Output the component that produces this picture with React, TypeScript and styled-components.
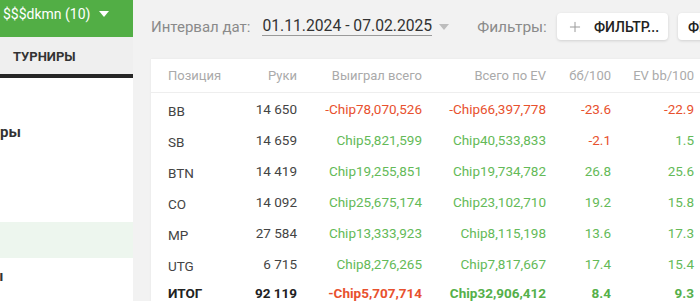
import styled, { createGlobalStyle } from "styled-components";
import { Plus } from "lucide-react";

const GlobalStyle = createGlobalStyle`
  body {
    margin: 0;
    overflow: hidden;
    background: #f2f2f2;
    font-family: Roboto, "Liberation Sans", sans-serif;
  }
`;

const Page = styled.div`
  display: flex;
  width: 700px;
  height: 301px;
  overflow: hidden;
`;

const Sidebar = styled.aside`
  width: 133px;
  flex-shrink: 0;
  background: #fff;
  overflow: hidden;
  display: flex;
  flex-direction: column;
`;

const AccountBar = styled.div`
  height: 37px;
  flex-shrink: 0;
  box-sizing: border-box;
  background: #52ae45;
  color: #fff;
  display: flex;
  align-items: flex-start;
  gap: 9px;
  padding: 4px 0 0 3px;
  font-size: 14px;
  font-weight: 400;
  line-height: 20px;
  white-space: nowrap;
`;

const Caret = styled.span<{ color: string; top?: number }>`
  width: 0;
  height: 0;
  border-left: 5px solid transparent;
  border-right: 5px solid transparent;
  border-top: 6px solid ${(p) => p.color};
  align-self: ${(p) => (p.top === undefined ? "center" : "flex-start")};
  margin-top: ${(p) => p.top ?? 0}px;
`;

const TabBar = styled.div`
  height: 41px;
  flex-shrink: 0;
  box-sizing: border-box;
  background: #efefef;
  border-bottom: 4px solid #262626;
  display: flex;
  align-items: center;
  padding: 2px 0 0 13px;
  font-size: 13px;
  font-weight: 700;
  color: #333;
`;

const MenuItem = styled.div<{ active?: boolean; shift?: number }>`
  height: 36px;
  flex-shrink: 0;
  display: flex;
  align-items: center;
  background: ${(p) => (p.active ? "#edf6ee" : "transparent")};
  font-size: 15px;
  font-weight: 700;
  color: #333;
  white-space: nowrap;
  span {
    margin-left: ${(p) => -(p.shift ?? 0)}px;
  }
`;

const Main = styled.main`
  flex: 1;
  padding-left: 18px;
  display: flex;
  flex-direction: column;
  min-width: 0;
`;

const Toolbar = styled.div`
  height: 53px;
  flex-shrink: 0;
  margin-bottom: 6px;
  display: flex;
  align-items: center;
  white-space: nowrap;
  font-size: 15px;
`;

const Label = styled.span<{ gap?: number; size?: number }>`
  color: #8a8a8a;
  font-size: ${(p) => p.size ?? 15}px;
  margin-left: ${(p) => p.gap ?? 0}px;
`;

const DateRange = styled.span`
  color: #333;
  font-size: 15.7px;
  margin-left: 12px;
  border-bottom: 1px solid #9a9a9a;
  line-height: 18px;
  margin-right: 7px;
`;

const FilterButton = styled.button`
  flex-shrink: 0;
  width: 111px;
  height: 27px;
  margin-left: 10px;
  padding: 0 0 0 10px;
  border: none;
  border-radius: 4px;
  background: #fff;
  box-shadow: 0 1px 3px rgba(0, 0, 0, 0.14);
  display: flex;
  align-items: center;
  gap: 11px;
  font-family: inherit;
  font-size: 14px;
  font-weight: 500;
  color: #222;
  svg {
    color: #9a9a9a;
    flex-shrink: 0;
  }
`;

const Card = styled.div`
  width: 660px;
  flex-shrink: 0;
  background: #fff;
  box-shadow: 0 0 2px rgba(0, 0, 0, 0.06);
  display: grid;
  grid-template-columns: 89px 57px 125px 124px 65px 83px 1fr;
  font-size: 13.5px;
`;

const HeadCell = styled.div`
  height: 33px;
  display: flex;
  align-items: center;
  justify-content: flex-end;
  font-size: 13px;
  color: #aaa;
  border-bottom: 1px solid #eee;
  white-space: nowrap;
  &:first-child {
    justify-content: flex-start;
    padding-left: 17px;
  }
`;

type Tone = "pos" | "neg" | "plain";

const Cell = styled.div<{ tone: Tone; total?: boolean; first?: boolean }>`
  height: ${(p) => (p.total ? 27 : 31)}px;
  box-sizing: border-box;
  display: flex;
  align-items: center;
  justify-content: ${(p) => (p.first ? "flex-start" : "flex-end")};
  padding-left: ${(p) => (p.first ? 17 : 0)}px;
  padding-top: ${(p) => (p.first && !p.total ? 5 : 0)}px;
  white-space: nowrap;
  font-weight: ${(p) => (p.total ? 700 : 400)};
  color: ${(p) =>
    p.tone === "pos"
      ? p.total
        ? "#55b04a"
        : "#64ba58"
      : p.tone === "neg"
      ? "#e8512e"
      : p.total
      ? "#222"
      : "#444"};
`;

const headers = ["Позиция", "Руки", "Выиграл всего", "Всего по EV", "бб/100", "EV bb/100", ""];

const rows = [
  ["BB", "14 650", "-Chip78,070,526", "-Chip66,397,778", "-23.6", "-22.9"],
  ["SB", "14 659", "Chip5,821,599", "Chip40,533,833", "-2.1", "1.5"],
  ["BTN", "14 419", "Chip19,255,851", "Chip19,734,782", "26.8", "25.6"],
  ["CO", "14 092", "Chip25,675,174", "Chip23,102,710", "19.2", "15.8"],
  ["MP", "27 584", "Chip13,333,923", "Chip8,115,198", "13.6", "17.3"],
  ["UTG", "6 715", "Chip8,276,265", "Chip7,817,667", "17.4", "15.4"],
  ["ИТОГ", "92 119", "-Chip5,707,714", "Chip32,906,412", "8.4", "9.3"],
];

function toneOf(value: string, col: number): Tone {
  if (col < 2) return "plain";
  return value.startsWith("-") ? "neg" : "pos";
}

export default function App() {
  return (
    <Page>
      <GlobalStyle />
      <Sidebar>
        <AccountBar>
          $$$dkmn (10)
          <Caret color="#fff" top={7} />
        </AccountBar>
        <TabBar>ТУРНИРЫ</TabBar>
        <MenuItem />
        <MenuItem>
          <span>ры</span>
        </MenuItem>
        <MenuItem />
        <MenuItem />
        <MenuItem active />
        <MenuItem shift={9}>
          <span>ы</span>
        </MenuItem>
      </Sidebar>
      <Main>
        <Toolbar>
          <Label>Интервал дат:</Label>
          <DateRange>01.11.2024 - 07.02.2025</DateRange>
          <Caret color="#bdbdbd" />
          <Label gap={28} size={15.5}>
            Фильтры:
          </Label>
          <FilterButton>
            <Plus size={16} strokeWidth={1.5} />
            ФИЛЬТР...
          </FilterButton>
          <FilterButton>ФИЛЬТР...</FilterButton>
        </Toolbar>
        <Card>
          {headers.map((h, i) => (
            <HeadCell key={i}>{h}</HeadCell>
          ))}
          {rows.map((r, ri) =>
            [...r, ""].map((v, ci) => (
              <Cell
                key={`${ri}-${ci}`}
                first={ci === 0}
                total={ri === rows.length - 1}
                tone={toneOf(v, ci)}
              >
                {v}
              </Cell>
            ))
          )}
        </Card>
      </Main>
    </Page>
  );
}
